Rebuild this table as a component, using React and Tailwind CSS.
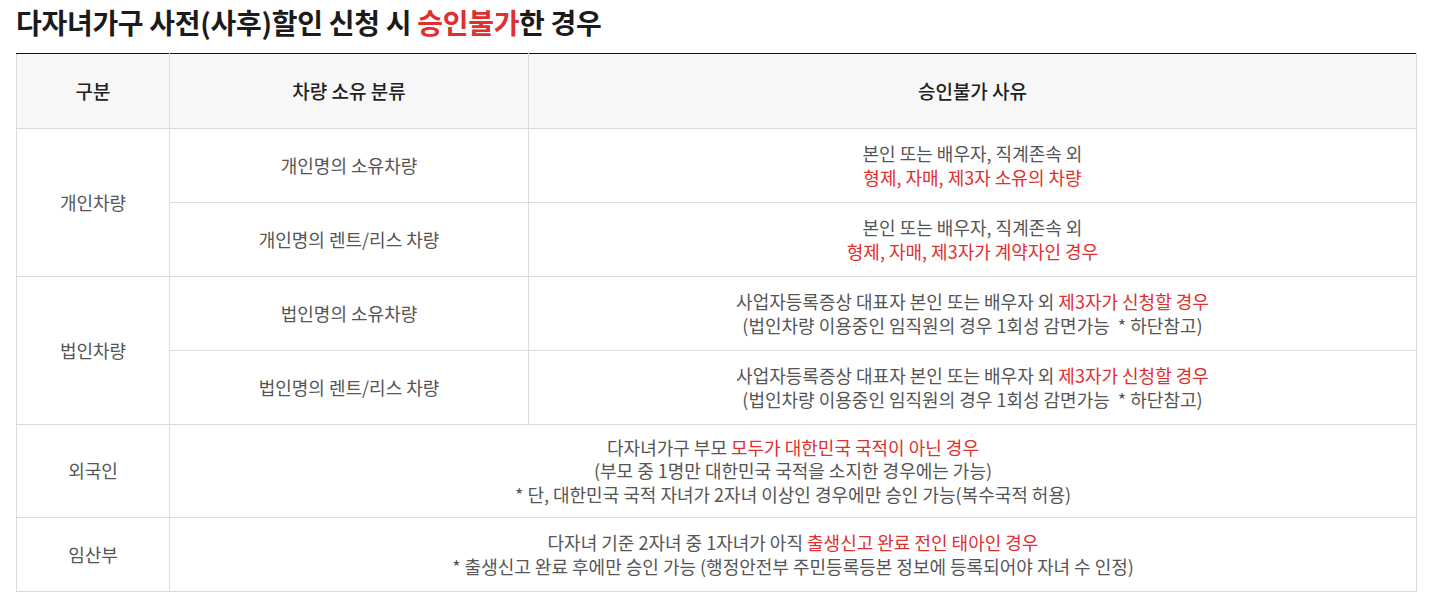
const rows = [
  {
    group: "개인차량",
    span: 2,
    type: "개인명의 소유차량",
    reason: [
      [["본인 또는 배우자, 직계존속 외", false]],
      [["형제, 자매, 제3자 소유의 차량", true]],
    ],
  },
  {
    type: "개인명의 렌트/리스 차량",
    reason: [
      [["본인 또는 배우자, 직계존속 외", false]],
      [["형제, 자매, 제3자가 계약자인 경우", true]],
    ],
  },
  {
    group: "법인차량",
    span: 2,
    type: "법인명의 소유차량",
    reason: [
      [
        ["사업자등록증상 대표자 본인 또는 배우자 외 ", false],
        ["제3자가 신청할 경우", true],
      ],
      [["(법인차량 이용중인 임직원의 경우 1회성 감면가능  * 하단참고)", false]],
    ],
  },
  {
    type: "법인명의 렌트/리스 차량",
    reason: [
      [
        ["사업자등록증상 대표자 본인 또는 배우자 외 ", false],
        ["제3자가 신청할 경우", true],
      ],
      [["(법인차량 이용중인 임직원의 경우 1회성 감면가능  * 하단참고)", false]],
    ],
  },
];

const Lines = ({ lines }) =>
  lines.map((line, i) => (
    <div key={i} className="whitespace-pre">
      {line.map(([t, red], j) => (
        <span key={j} className={red ? "text-[#e02f2f]" : ""}>
          {t}
        </span>
      ))}
    </div>
  ));

export default function App() {
  return (
    <div
      className="px-4 pt-[2px] pb-4 bg-white text-[#555]"
      style={{ fontFamily: '"Noto Sans CJK KR", "Noto Sans", sans-serif' }}
    >
      <h2 className="text-[28px] font-bold text-[#1b1b1b] leading-[40px] tracking-[-0.3px] mb-[11px]">
        다자녀가구 사전(사후)할인 신청 시{" "}
        <span className="text-[#e02f2f]">승인불가</span>한 경우
      </h2>

      <table className="w-full border-collapse border-t border-t-[#0e0e2c] text-[18px] text-center leading-[23.5px]">
        <colgroup>
          <col className="w-[153px]" />
          <col className="w-[359px]" />
          <col />
        </colgroup>
        <thead>
          <tr className="h-[75px] bg-[#f7f7f7] text-[#222] text-[19px]">
            <th className="border border-[#dcdcdc] border-t-[#0e0e2c] font-medium">구분</th>
            <th className="border border-[#dcdcdc] border-t-[#0e0e2c] font-medium">차량 소유 분류</th>
            <th className="border border-[#dcdcdc] border-t-[#0e0e2c] font-medium">승인불가 사유</th>
          </tr>
        </thead>
        <tbody>
          {rows.map((r, i) => (
            <tr key={i} className="h-[74px]">
              {r.group && (
                <td rowSpan={r.span} className="border border-[#dcdcdc]">
                  {r.group}
                </td>
              )}
              <td className="border border-[#dcdcdc]">{r.type}</td>
              <td className="border border-[#dcdcdc]">
                <Lines lines={r.reason} />
              </td>
            </tr>
          ))}
          <tr className="h-[93px]">
            <td className="border border-[#dcdcdc]">외국인</td>
            <td colSpan={2} className="border border-[#dcdcdc]">
              <Lines
                lines={[
                  [
                    ["다자녀가구 부모 ", false],
                    ["모두가 대한민국 국적이 아닌 경우", true],
                  ],
                  [["(부모 중 1명만 대한민국 국적을 소지한 경우에는 가능)", false]],
                  [["* 단, 대한민국 국적 자녀가 2자녀 이상인 경우에만 승인 가능(복수국적 허용)", false]],
                ]}
              />
            </td>
          </tr>
          <tr className="h-[74px]">
            <td className="border border-[#dcdcdc]">임산부</td>
            <td colSpan={2} className="border border-[#dcdcdc]">
              <Lines
                lines={[
                  [
                    ["다자녀 기준 2자녀 중 1자녀가 아직 ", false],
                    ["출생신고 완료 전인 태아인 경우", true],
                  ],
                  [["* 출생신고 완료 후에만 승인 가능 (행정안전부 주민등록등본 정보에 등록되어야 자녀 수 인정)", false]],
                ]}
              />
            </td>
          </tr>
        </tbody>
      </table>
    </div>
  );
}
